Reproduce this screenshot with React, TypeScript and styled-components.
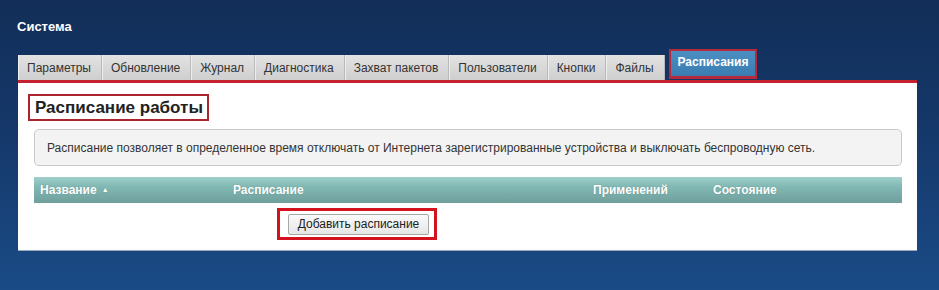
import styled, { createGlobalStyle } from "styled-components";

const GlobalStyle = createGlobalStyle`
  html, body {
    margin: 0;
    padding: 0;
  }
  body {
    font-family: "Liberation Sans", Arial, sans-serif;
    background: #14335f;
  }
`

const Page = styled.div`
  width: 939px;
  height: 290px;
  box-sizing: border-box;
  padding: 18px 22px 0 18px;
  background: linear-gradient(180deg, #122e58 0%, #15386a 45%, #1a4b86 100%);
  overflow: hidden;
`

const Title = styled.h1`
  margin: 0 0 0 -1px;
  height: 18px;
  line-height: 18px;
  font-size: 13px;
  font-weight: bold;
  color: #fff;
`

const Tabs = styled.div`
  display: flex;
  align-items: flex-end;
  margin-top: 14px;
  height: 30px;
`

const Tab = styled.div<{ $active?: boolean }>`
  box-sizing: border-box;
  display: flex;
  align-items: center;
  font-size: 12px;
  white-space: nowrap;
  ${p => p.$active ? `
    height: 30px;
    margin-left: 4px;
    margin-bottom: 1px;
    padding: 0 7px 4px;
    border: 2px solid #b6283c;
    border-bottom-width: 3px;
    background: linear-gradient(180deg, #4b8fc3 0%, #3a7cb1 100%);
    color: #fff;
    font-weight: bold;
  ` : `
    height: 25px;
    padding: 0 10px 0 9px;
    color: #333;
    background: linear-gradient(180deg, #e2e2e2 0%, #cfcfcf 100%);
    border-right: 1px solid #b9b9b9;
    box-shadow: inset 1px 0 0 #eee;
  `}
`

const Panel = styled.div`
  width: 899px;
  box-sizing: border-box;
  background: #fff;
  border-top: 3px solid #c5222f;
  padding: 11px 15px 10px 10px;
  height: 170px;
  box-shadow: 0 1px 0 #9aa9bb;
`

const Heading = styled.h2`
  display: inline-block;
  box-sizing: border-box;
  margin: 0;
  height: 27px;
  padding: 0 4px 0 5px;
  border: 2px solid #ad2330;
  font-size: 17px;
  line-height: 23px;
  font-weight: bold;
  color: #222;
`

const Info = styled.div`
  margin: 8px 0 0 6px;
  box-sizing: border-box;
  height: 37px;
  display: flex;
  align-items: center;
  padding-left: 12px;
  border: 1px solid #c9c9c9;
  border-radius: 5px;
  background: #f3f3f3;
  font-size: 12px;
  color: #333;
`

const TableHead = styled.div`
  display: grid;
  grid-template-columns: 193px 360px 120px 1fr;
  align-items: center;
  margin: 11px 0 0 6px;
  height: 26px;
  padding-left: 6px;
  background: linear-gradient(180deg, #a0d0cb 0%, #82b9b4 35%, #6f9f9c 100%);
`

const HeadCell = styled.div`
  font-size: 12px;
  font-weight: bold;
  color: #fff;
  text-shadow: 0 0 1px rgba(60, 100, 100, 0.5);
`

const SortMark = styled.span`
  font-size: 7px;
  margin-left: 5px;
  vertical-align: 2px;
`

const Actions = styled.div`
  display: flex;
  margin: 5px 0 0 249px;
`

const Highlight = styled.div`
  box-sizing: border-box;
  width: 160px;
  height: 32px;
  border: 3px solid #d4111f;
  display: flex;
  align-items: center;
  padding-left: 8px;
`

const Button = styled.button`
  box-sizing: border-box;
  width: 141px;
  height: 21px;
  padding: 0;
  font-family: "Liberation Sans", Arial, sans-serif;
  font-size: 12px;
  color: #222;
  background: linear-gradient(180deg, #fafafa 0%, #e6e6e6 100%);
  border: 1px solid #a8a8a8;
  border-radius: 2px;
`

const tabs = [
  "Параметры",
  "Обновление",
  "Журнал",
  "Диагностика",
  "Захват пакетов",
  "Пользователи",
  "Кнопки",
  "Файлы",
]

export default function App() {
  return (
    <>
      <GlobalStyle />
      <Page>
        <Title>Система</Title>
        <Tabs>
          {tabs.map(t => <Tab key={t}>{t}</Tab>)}
          <Tab $active>Расписания</Tab>
        </Tabs>
        <Panel>
          <Heading>Расписание работы</Heading>
          <Info>
            Расписание позволяет в определенное время отключать от Интернета зарегистрированные устройства и выключать беспроводную сеть.
          </Info>
          <TableHead>
            <HeadCell>Название<SortMark>▲</SortMark></HeadCell>
            <HeadCell>Расписание</HeadCell>
            <HeadCell>Применений</HeadCell>
            <HeadCell>Состояние</HeadCell>
          </TableHead>
          <Actions>
            <Highlight>
              <Button>Добавить расписание</Button>
            </Highlight>
          </Actions>
        </Panel>
      </Page>
    </>
  )
}
